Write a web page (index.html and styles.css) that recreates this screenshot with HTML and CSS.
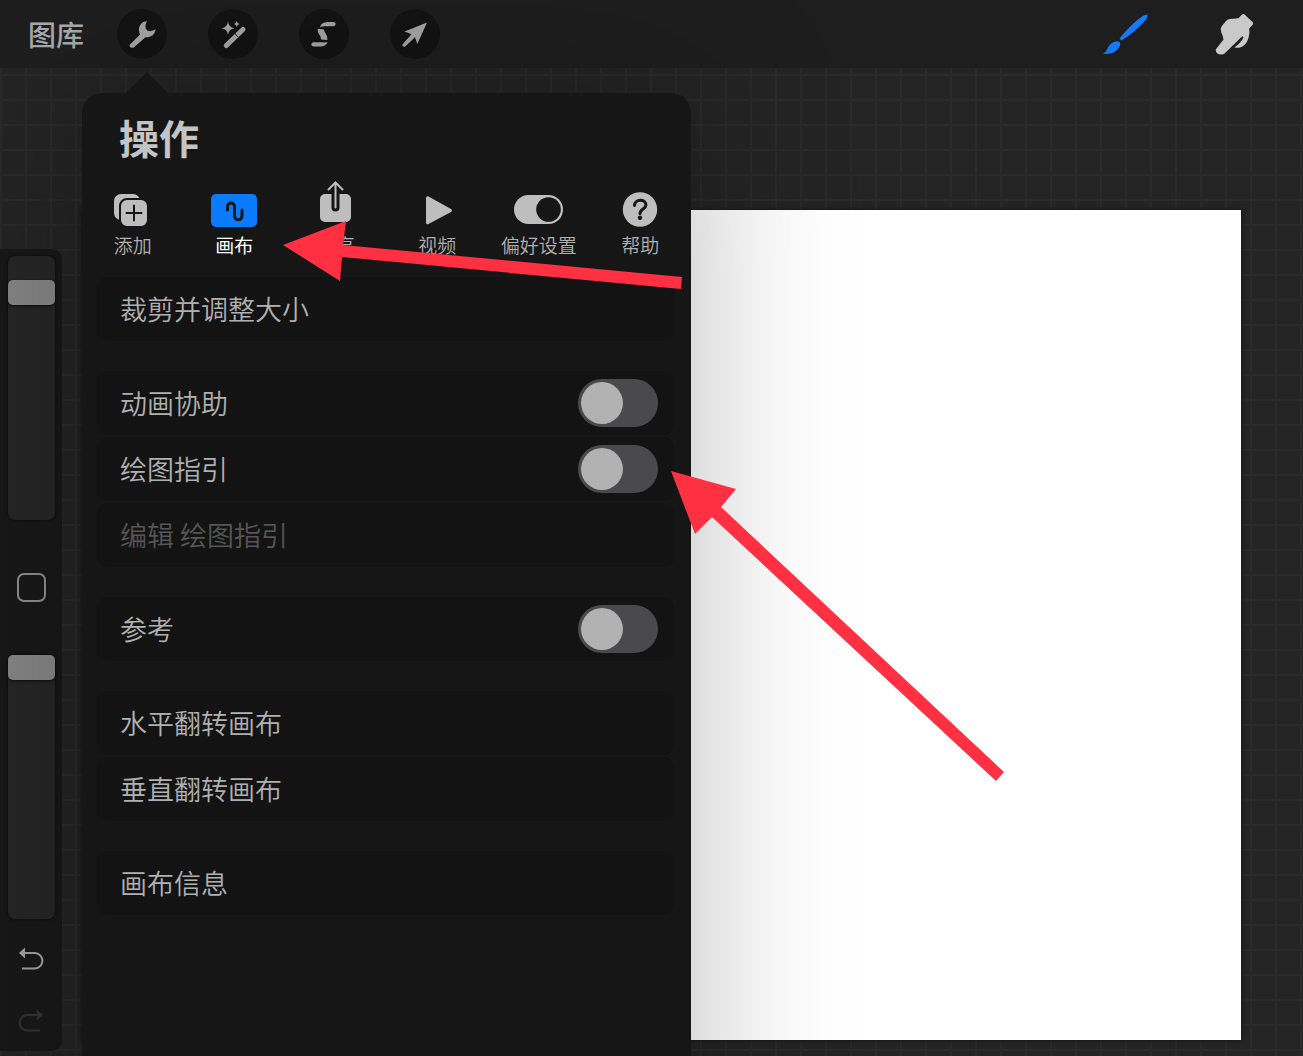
FILE: index.html
```html
<!DOCTYPE html>
<html lang="zh-CN">
<head>
<meta charset="utf-8">
<meta name="viewport" content="width=device-width, initial-scale=1">
<title>操作</title>
<link rel="stylesheet" href="styles.css">
</head>
<body>
<div class="app">
  <header class="topbar">
    <a class="gallery" href="#">图库</a>
    <nav class="tools">
      <button class="tool" type="button" aria-label="操作">
        <svg viewBox="0 0 50 50"><path d="M13 35.500L23 25.500C21.500 21 21.500 18 24 15C25.500 13 28 12 30 12.200C28 15 28 19 29.700 21C31.500 22.800 35.500 22.500 38.500 20C38.500 25 34.500 28.500 28.500 28.300L17 38.300C14.500 40 11.500 37.500 13 35.500Z"/></svg>
      </button>
      <button class="tool" type="button" aria-label="调整">
        <svg viewBox="0 0 50 50"><path d="M20 12.500Q20.800 18.500 26.500 19.300Q20.800 20.100 20 26Q19.200 20.100 13.500 19.300Q19.200 18.500 20 12.500ZM28.700 12Q29 14.700 31.700 15Q29 15.300 28.700 18Q28.400 15.300 25.700 15Q28.400 14.700 28.700 12Z"/><path class="wand" d="M18.300 36.500L35 20.500"/><path class="wand-gap" d="M26.500 24L30.500 28.500"/></svg>
      </button>
      <button class="tool" type="button" aria-label="选取">
        <svg viewBox="0 0 50 50"><path d="M21 18.200C22 14.500 25 13.200 28.500 13H34.500C37.300 13 37.300 17.200 34.500 17.200H29C26 17.200 23.500 17 21 18.200ZM18.800 19.700L25 20.500C25 24 29 25.500 28.300 31L22 30.500C22.500 26 18 25 18.800 19.700ZM28.500 33C27.500 36 25 37.500 21.500 37.500H14.500C11.700 37.500 11.700 33.300 14.500 33.300H21C24 33.300 26 33.800 28.500 33Z"/></svg>
      </button>
      <button class="tool" type="button" aria-label="变换">
        <svg viewBox="0 0 50 50"><path d="M37 13.500L14.500 22.500L21.500 25.200L12.800 35C11.500 37 13.800 38.700 15.500 37.300L25 28.300L27.300 35Z"/></svg>
      </button>
    </nav>
    <div class="brushes">
      <button class="brush brush-active" type="button" aria-label="绘图">
        <svg viewBox="0 0 50 50"><path d="M46.500 5.500C47 8 45 11 42.500 13.500C36 20.500 27 27.500 20.500 31.500L18.500 29.800C22 24.500 30 16.500 37 10.500C40 8 43.500 5.500 46.500 5.500ZM17.500 32.500C20 33.500 19.500 36 18 38.500C14.500 43.500 9 46 2 44.500C5 43.500 5.500 41.500 7 38.500C9.500 34 14 31.500 17.500 32.500Z"/></svg>
      </button>
      <button class="brush" type="button" aria-label="涂抹">
        <svg viewBox="0 0 50 50"><path d="M33 5.500Q34.500 4.500 36 6L43.500 13Q45 14.500 43.500 16L40.200 19.500Q41 24 39.500 29C38 34 35 37.500 31 38.500Q28 39.200 25.500 38.500Q29.500 36 33.500 30.500Q35 28 33.800 27.300Q32.500 27.500 31 29.500L15.500 44.500Q14 45.800 12 45.500L9 45Q6.500 43.500 6.700 40.500L14.500 30.500Q14 27 12.200 23Q11 20 12.500 17.500L17 12Q18.500 10 21 10L29.500 9.300Z"/></svg>
      </button>
    </div>
  </header>

  <main class="workspace">
    <aside class="sidebar">
      <input class="slider" type="range" min="0" max="100" value="90" aria-label="画笔大小">
      <button class="modify" type="button" aria-label="修改"></button>
      <input class="slider" type="range" min="0" max="100" value="100" aria-label="不透明度">
      <div class="history">
        <button class="step" type="button" aria-label="撤销">
          <svg viewBox="0 0 26 24"><path d="M4 6H17.500A7.800 7.800 0 0 1 17.500 21.500H4"/><path class="head" d="M1 6L7 .5V11.500Z"/></svg>
        </button>
        <button class="step" type="button" aria-label="重做" disabled>
          <svg viewBox="0 0 26 24"><path d="M22 6H8.500A7.800 7.800 0 0 0 8.500 21.500H22"/><path class="head" d="M25 6L19 .5V11.500Z"/></svg>
        </button>
      </div>
    </aside>

    <div class="canvas"></div>

    <section class="popover" aria-labelledby="popover-title">
      <h1 class="title" id="popover-title">操作</h1>
      <nav class="tabs">
        <button class="tab" type="button">
          <svg viewBox="0 0 50 60" aria-hidden="true"><rect class="fill" x="6" y="14" width="26" height="26" rx="7"/><rect class="panel-edge" x="12" y="19" width="28" height="28" rx="7"/><path class="ink" d="M26 25.500V40.500M18.500 33H33.500"/></svg>
          <span>添加</span>
        </button>
        <button class="tab tab-active" type="button">
          <svg viewBox="0 0 50 60" aria-hidden="true"><rect class="accent" x="2" y="14" width="46" height="33" rx="5"/><path class="squiggle" d="M18.500 30V26.500A3.500 3.500 0 0 1 25.500 26.500V36A3.500 3.500 0 0 0 33 36V30"/></svg>
          <span>画布</span>
        </button>
        <button class="tab" type="button">
          <svg viewBox="0 0 50 60" aria-hidden="true"><rect class="fill" x="9" y="14" width="31" height="28" rx="5"/><path class="gap" d="M24.500 14V27.500"/><path class="shaft" d="M24.500 27.500V2.500M17.500 9.500L24.500 2.500L31.500 9.500"/></svg>
          <span>分享</span>
        </button>
        <button class="tab" type="button">
          <svg viewBox="0 0 50 60" aria-hidden="true"><path class="fill" d="M14 18Q14 15.500 16.500 16.500L39 29Q41 30.500 39 32L16.500 44Q14 45 14 42.500Z"/></svg>
          <span>视频</span>
        </button>
        <button class="tab" type="button">
          <svg viewBox="0 0 50 60" aria-hidden="true"><rect class="fill" x="0" y="15" width="49" height="29" rx="14.500"/><circle class="panel" cx="34.500" cy="29.500" r="12.300"/></svg>
          <span>偏好设置</span>
        </button>
        <button class="tab" type="button">
          <svg viewBox="0 0 50 60" aria-hidden="true"><circle class="fill" cx="25" cy="29.500" r="17.200"/><path class="question" d="M19.500 25.500C19.500 18.500 31 18.500 31 25C31 29 25 29 25 33.500"/><circle class="panel" cx="25" cy="37.800" r="2.200"/></svg>
          <span>帮助</span>
        </button>
      </nav>

      <div class="groups">
        <div class="group">
          <button class="row" type="button">裁剪并调整大小</button>
        </div>
        <div class="group">
          <label class="row">动画协助<input class="switch" type="checkbox"></label>
          <label class="row">绘图指引<input class="switch" type="checkbox"></label>
          <button class="row" type="button" disabled>编辑 绘图指引</button>
        </div>
        <div class="group">
          <label class="row">参考<input class="switch" type="checkbox"></label>
        </div>
        <div class="group">
          <button class="row" type="button">水平翻转画布</button>
          <button class="row" type="button">垂直翻转画布</button>
        </div>
        <div class="group">
          <button class="row" type="button">画布信息</button>
        </div>
      </div>
    </section>
  </main>

  <svg class="arrows" width="1010" height="790" viewBox="0 0 1010 790" aria-hidden="true">
    <path d="M283 245L346 221L343 245L682 277L681 289L342 257L340 281Z"/>
    <path d="M671 471L736 489L721 507L1004 772L996 781L712 517L695 534Z"/>
  </svg>
</div>
</body>
</html>
```
FILE: styles.css
```css
* {
  box-sizing: border-box;
}

body {
  margin: 0;
  background: #242424;
  color: #b0b0b0;
  font-family: "Noto Sans CJK SC", sans-serif;
}

button {
  padding: 0;
  border: 0;
  background: none;
  color: inherit;
  font: inherit;
}

.app {
  position: relative;
  display: flex;
  flex-direction: column;
  min-height: 100vh;
  overflow: hidden;
}

/* Top bar */
.topbar {
  display: flex;
  align-items: center;
  height: 68px;
  padding: 0 44px 0 28px;
  background: #1e1e1e;
}

.gallery {
  margin-right: 33px;
  color: #aaa;
  font-size: 28px;
  font-weight: 500;
  line-height: 40px;
  text-decoration: none;
}

.tools {
  display: flex;
  gap: 41px;
}

.tool,
.brush {
  width: 50px;
  height: 50px;
  border-radius: 50%;
}

.tool {
  background: #131313;
}

.tool svg,
.brush svg {
  display: block;
  fill: #a6a6a6;
}

.tool .wand {
  fill: none;
  stroke: #a6a6a6;
  stroke-width: 5;
  stroke-linecap: round;
}

.tool .wand-gap {
  fill: none;
  stroke: #131313;
  stroke-width: 1;
}

.brushes {
  display: flex;
  gap: 58px;
  margin-left: auto;
}

.brush svg {
  fill: #c9c9c9;
}

.brush-active svg {
  fill: #1579fb;
}

/* Workspace */
.workspace {
  position: relative;
  display: flex;
  flex: 1;
  align-items: stretch;
  background-color: #242424;
  background-image:
    linear-gradient(90deg, #2a2a2a 2px, transparent 2px),
    linear-gradient(#2a2a2a 2px, transparent 2px);
  background-position: 0 6px;
  background-size: 25px 25px;
}

.sidebar {
  display: flex;
  flex-direction: column;
  align-items: center;
  align-self: flex-start;
  width: 62px;
  margin: 181px 0 4px;
  padding: 7px 0 18px;
  border-radius: 0 10px 10px 0;
  background: #181818;
}

.slider {
  width: 47px;
  height: 264px;
  margin: 0;
  appearance: none;
  border-radius: 7px;
  background: #262626;
  box-shadow: 0 0 2px 1px #101010;
  direction: rtl;
  writing-mode: vertical-lr;
}

.slider::-webkit-slider-thumb {
  width: 47px;
  height: 25px;
  appearance: none;
  border-radius: 5px;
  background: #858585;
  box-shadow: 0 1px 3px #0c0c0c;
}

.modify {
  width: 29px;
  height: 29px;
  margin: 53px 0;
  border: 2px solid #8c8c8c;
  border-radius: 7px;
}

.history {
  display: flex;
  flex-direction: column;
  gap: 38px;
  margin-top: 28px;
}

.step {
  width: 26px;
  height: 24px;
}

.step svg {
  display: block;
  fill: none;
  stroke: #a0a0a0;
  stroke-width: 2;
}

.step .head {
  fill: #a0a0a0;
  stroke: none;
}

.step:disabled svg {
  stroke: #333;
}

.step:disabled .head {
  fill: #333;
}

.canvas {
  flex: 1;
  margin: 142px 62px 16px 20px;
  background: #fff;
  box-shadow: 0 0 4px #111;
}

/* Actions popover */
.popover {
  position: absolute;
  top: 25px;
  bottom: -160px;
  left: 82px;
  width: 609px;
  padding-top: 14px;
  border-radius: 20px;
  background: #161616;
  box-shadow: 0 0 160px rgba(0, 0, 0, 0.27);
}

.popover::before {
  position: absolute;
  top: -21px;
  left: 43px;
  width: 44px;
  height: 22px;
  background: #161616;
  clip-path: polygon(50% 0, 100% 100%, 0 100%);
  content: "";
}

.title {
  margin: 0 37px;
  color: #c4c4c4;
  font-size: 40px;
  font-weight: 700;
  line-height: 60px;
}

.tabs {
  display: grid;
  grid-template-columns: repeat(6, 1fr);
  margin-top: 13px;
}

.tab {
  display: flex;
  flex-direction: column;
  align-items: center;
  font-size: 19px;
  line-height: 28px;
  font-weight: 350;
  white-space: nowrap;
}

.tab svg {
  width: 50px;
  height: 60px;
  margin-bottom: -9px;
}

.tab-active {
  color: #fff;
  font-weight: 400;
}

.fill {
  fill: #bebebe;
}

.accent {
  fill: #0a7aff;
}

.panel {
  fill: #161616;
}

.panel-edge {
  fill: #bebebe;
  stroke: #161616;
  stroke-width: 2;
}

.ink,
.squiggle,
.gap,
.shaft,
.question {
  fill: none;
  stroke: #161616;
  stroke-linecap: round;
}

.ink {
  stroke-width: 2;
}

.squiggle,
.question {
  stroke-width: 3;
}

.gap {
  stroke-width: 8;
}

.shaft {
  stroke: #bebebe;
  stroke-width: 2;
}

.groups {
  display: flex;
  flex-direction: column;
  gap: 30px;
  margin: 18px 17px 0 15px;
}

.group {
  display: flex;
  flex-direction: column;
  gap: 2px;
}

.row {
  display: flex;
  align-items: center;
  justify-content: space-between;
  height: 64px;
  padding: 0 16px 0 23px;
  border-radius: 10px;
  background: #131313;
  font-size: 27px;
  font-weight: 350;
  line-height: 40px;
}

.row:disabled {
  color: #565656;
}

.switch {
  width: 80px;
  height: 48px;
  margin: 0;
  padding: 3px;
  appearance: none;
  border-radius: 24px;
  background: #4a4a4c;
}

.switch::before {
  display: block;
  width: 42px;
  height: 42px;
  border-radius: 50%;
  background: #b2b2b2;
  content: "";
}

.switch:checked::before {
  margin-left: auto;
}

/* Tutorial arrows drawn over the interface */
.arrows {
  position: absolute;
  top: 0;
  left: 0;
  fill: #ff3042;
  pointer-events: none;
}
```
